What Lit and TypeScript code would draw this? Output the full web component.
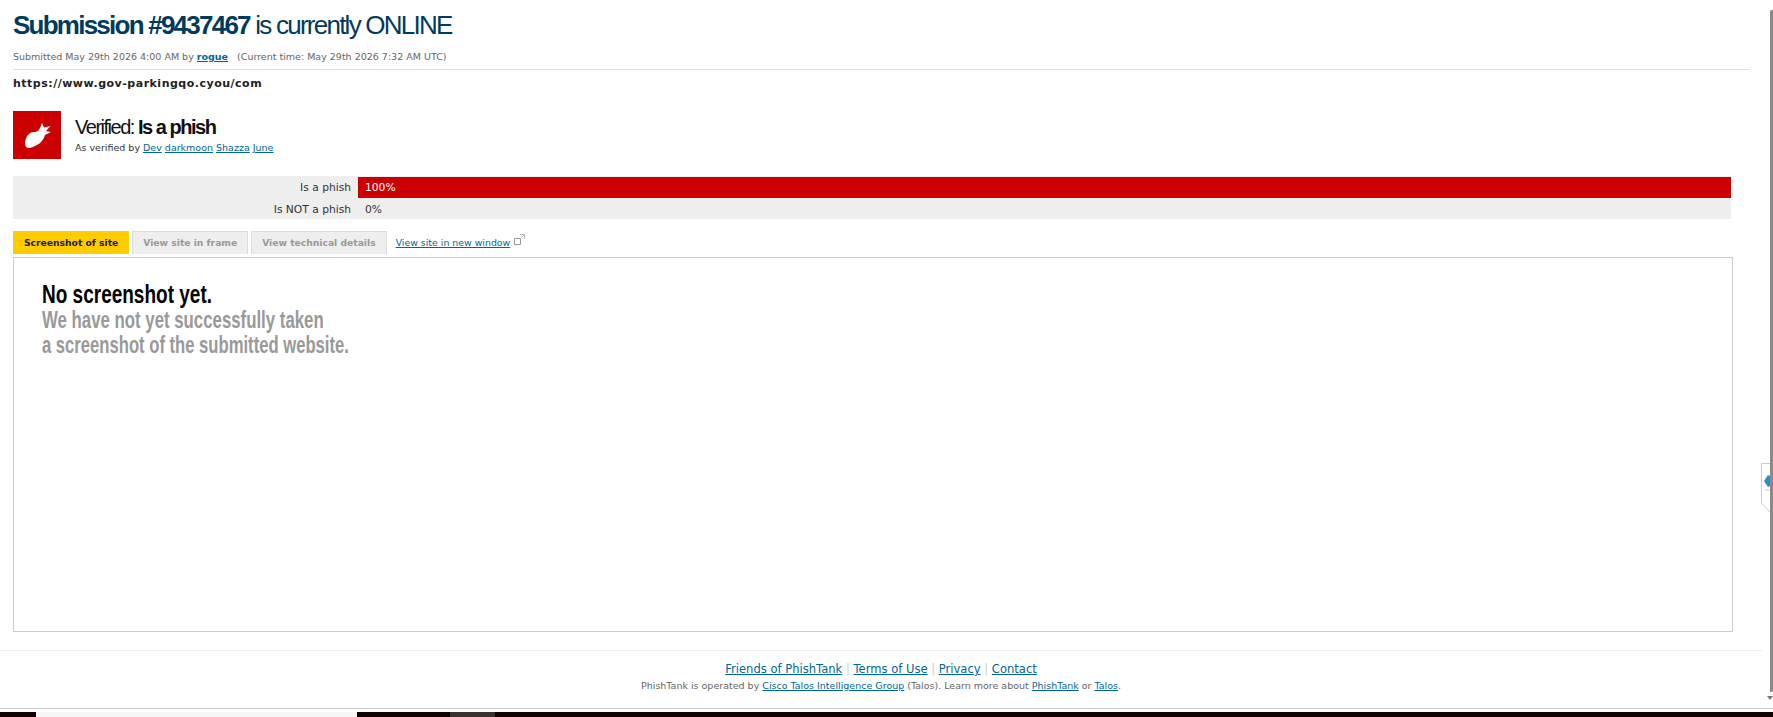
import { LitElement, html, css } from "lit";
import { customElement } from "lit/decorators.js";

@customElement("app-root")
export class AppRoot extends LitElement {
  static styles = css`
    :host { display: flex; width: 1773px; height: 717px; flex-direction: column; overflow: hidden; background: #fff; position: relative; font-family: "DejaVu Sans", Verdana, sans-serif; font-size: 10px; color: #333; }
    a { color: #006699; text-decoration: underline; }
    .top { flex: none; height: 708px; display: flex; }
    .page { flex: 1; min-width: 0; display: flex; flex-direction: column; }
    .content { padding: 0 21px 0 13px; flex: none; height: 650px; box-sizing: border-box; display: flex; flex-direction: column; }
    h1 { margin: 0; padding-top: 11px; height: 49px; box-sizing: border-box; font: 400 26px/29px "Liberation Sans", Arial, sans-serif; letter-spacing: -1.76px; color: #003a5c; white-space: nowrap; }
    h1 b { font-weight: 700; }
    .meta { height: 20px; line-height: 16px; font-size: 9.5px; color: #666; white-space: pre; }
    .meta a { font-weight: 700; }
    .rule { height: 1px; background: #ddd; margin-right: -3px; }
    .url { height: 41px; padding-top: 6px; box-sizing: border-box; font-size: 11px; line-height: 15px; font-weight: 700; color: #222; letter-spacing: 0.5px; }
    .verdict { display: flex; height: 48px; gap: 14px; }
    .badge { width: 48px; height: 48px; flex: none; display: block; }
    .vtitle { font: 400 20px/22px "Liberation Sans", Arial, sans-serif; letter-spacing: -1.48px; color: #111; padding-top: 5px; }
    .vtitle b { font-weight: 700; }
    .vby { font-size: 9.5px; line-height: 14px; color: #333; margin-top: 3px; }
    .bars { margin-top: 17px; width: 1718px; height: 43px; background: #eee; display: grid; grid-template-columns: 345px 1fr; grid-template-rows: 22px 21px; font-size: 10.7px; }
    .lab { text-align: right; padding-right: 7px; line-height: 24px; color: #333; }
    .val { padding-left: 7px; line-height: 23px; color: #333; }
    .val.full { background: #c00; color: #fff; margin-top: 1px; line-height: 21px; }
    .tabs { display: flex; margin-top: 12px; height: 23px; align-items: stretch; }
    .tab { box-sizing: border-box; padding: 0 10px; line-height: 21px; font-size: 9.2px; font-weight: 700; color: #999; background: #eee; border: 1px solid #ddd; border-bottom: 0; margin-right: 3px; white-space: nowrap; }
    .tab.on { background: #fc0; color: #222; border-color: #fc0; }
    .newwin { margin-left: 6px; line-height: 23px; font-size: 9.4px; white-space: nowrap; display: flex; align-items: flex-start; gap: 4px; }
    .newwin svg { margin-top: 3px; }
    .box { margin-top: 3px; width: 1720px; height: 375px; box-sizing: border-box; border: 1px solid #ccc; padding: 23px 0 0 28px; font-family: "Liberation Sans", sans-serif; font-weight: 700; font-size: 24px; line-height: 25px; color: #999; }
    .box span { display: block; width: max-content; transform-origin: left center; white-space: nowrap; }
    .l1 { color: #000; font-size: 25px; line-height: 26px; transform: scaleX(.76); }
    .l2 { transform: scaleX(.7); }
    .l3 { transform: scaleX(.693); }
    .footer { flex: 1; border-top: 1px solid #eee; margin-right: 5px; text-align: center; color: #666; }
    .flinks { font-size: 11.55px; line-height: 16px; margin-top: 10px; color: #ccc; }
    .fsub { font-size: 9.5px; line-height: 14px; margin-top: 2px; }
    .scroll { width: 6px; flex: none; display: flex; flex-direction: column; align-items: flex-end; padding-top: 10px; box-sizing: border-box; }
    .thumb { width: 3px; height: 682px; background: #8a8a8a; border-radius: 2px 0 2px 0; }
    .arrow { width: 0; height: 0; border: 3px solid transparent; border-top: 4px solid #777; border-bottom: 0; margin-top: 4px; }
    .tab-widget { position: absolute; left: 1761px; top: 463px; display: block; }
    .bottom { flex: 1; border-top: 1px solid #ccc; display: flex; flex-direction: column; }
    .gap { height: 3px; background: #fff; flex: none; }
    .strip { flex: 1; background: #120000; display: flex; padding-left: 36px; }
    .s1 { width: 321px; background: #f5f5f5; }
    .s2 { width: 45px; margin-left: 93px; background: #3a3030; }
  `;

  render() {
    return html`
      <div class="top">
        <div class="page">
          <div class="content">
            <h1><b>Submission #9437467</b> is currently ONLINE</h1>
            <div class="meta">Submitted May 29th 2026 4:00 AM by <a href="#">rogue</a>   (Current time: May 29th 2026 7:32 AM UTC)</div>
            <div class="rule"></div>
            <div class="url">https://www.gov-parkingqo.cyou/com</div>
            <div class="verdict">
              <svg class="badge" viewBox="0 0 48 48">
                <rect width="48" height="48" fill="#c00"/>
                <path fill="#fff" d="M13 36C11 32 12.500 26 16 23C18 21 20 21 22 21L25 20L27 17L29 12L31 16.500L37.500 15L33 20L38 21L32 24C31 28 28 32 24 34C20 36 16 38.500 13 36Z"/>
              </svg>
              <div>
                <div class="vtitle">Verified: <b>Is a phish</b></div>
                <div class="vby">As verified by <a href="#">Dev</a> <a href="#">darkmoon</a> <a href="#">Shazza</a> <a href="#">June</a></div>
              </div>
            </div>
            <div class="bars">
              <div class="lab">Is a phish</div><div class="val full">100%</div>
              <div class="lab">Is NOT a phish</div><div class="val">0%</div>
            </div>
            <div class="tabs">
              <div class="tab on">Screenshot of site</div>
              <div class="tab">View site in frame</div>
              <div class="tab">View technical details</div>
              <div class="newwin"><a href="#">View site in new window</a>
                <svg width="11" height="11" viewBox="0 0 11 11" fill="none" stroke="#999"><path d="M.5 4.500h6v6h-6z"/><path d="M6 .5h4.500V5M10.500.5 7 4" stroke="#bbb"/></svg>
              </div>
            </div>
            <div class="box">
              <span class="l1">No screenshot yet.</span>
              <span class="l2">We have not yet successfully taken</span>
              <span class="l3">a screenshot of the submitted website.</span>
            </div>
          </div>
          <div class="footer">
            <div class="flinks"><a href="#">Friends of PhishTank</a> | <a href="#">Terms of Use</a> | <a href="#">Privacy</a> | <a href="#">Contact</a></div>
            <div class="fsub">PhishTank is operated by <a href="#">Cisco Talos Intelligence Group</a> (Talos). Learn more about <a href="#">PhishTank</a> or <a href="#">Talos</a>.</div>
          </div>
        </div>
        <div class="scroll"><div class="thumb"></div><div class="arrow"></div></div>
      </div>
      <div class="bottom">
        <div class="gap"></div>
        <div class="strip"><div class="s1"></div><div class="s2"></div></div>
      </div>
      <svg class="tab-widget" width="9" height="50" viewBox="0 0 9 50">
        <path d="M9 .5H.5V40L9 49" fill="#fff" stroke="#ccc"/>
        <path d="M7 12 3 18l4 6 2-1V13z" fill="#2a8fc4"/>
        <path d="M4 27h5" stroke="#ccc"/>
      </svg>
    `;
  }
}
